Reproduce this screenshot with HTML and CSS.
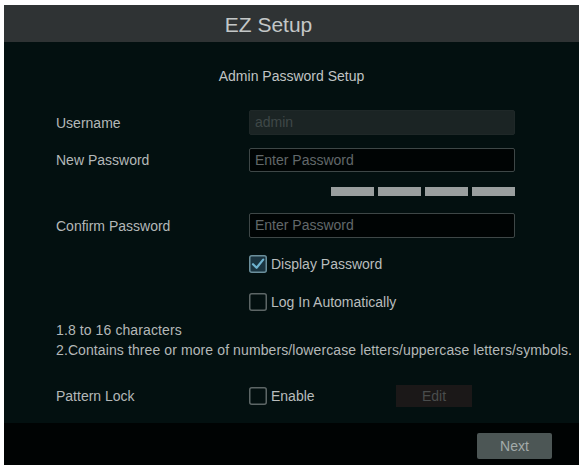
FILE: index.html
```html
<!DOCTYPE html>
<html>
<head>
<meta charset="utf-8">
<link rel="stylesheet" href="styles.css">
</head>
<body>
<div class="window">
  <div class="header">EZ Setup</div>
  <div class="content">
    <div class="subtitle">Admin Password Setup</div>
    <div class="row r-user">
      <div class="label">Username</div>
      <div class="input disabled">admin</div>
    </div>
    <div class="row r-new">
      <div class="label">New Password</div>
      <div class="input">Enter Password</div>
    </div>
    <div class="row r-bars">
      <div></div>
      <div class="bars"><span></span><span></span><span></span><span></span></div>
    </div>
    <div class="row r-confirm">
      <div class="label">Confirm Password</div>
      <div class="input">Enter Password</div>
    </div>
    <div class="row r-display">
      <div></div>
      <div class="check">
        <svg class="box" width="18" height="18" viewBox="0 0 18 18"><rect x="0.75" y="0.75" width="16.5" height="16.5" rx="2" fill="#1a3440" stroke="#6b8f9c" stroke-width="1.5"/><path d="M4 9.2 L7.6 12.8 L14.2 4.6" fill="none" stroke="#6fb3cf" stroke-width="2.2" stroke-linecap="round" stroke-linejoin="round"/></svg>
        <span>Display Password</span>
      </div>
    </div>
    <div class="row r-auto">
      <div></div>
      <div class="check">
        <svg class="box" width="18" height="18" viewBox="0 0 18 18"><rect x="0.75" y="0.75" width="16.5" height="16.5" rx="2" fill="none" stroke="#5d6666" stroke-width="1.5"/></svg>
        <span>Log In Automatically</span>
      </div>
    </div>
    <div class="notes">
      <div>1.8 to 16 characters</div>
      <div>2.Contains three or more of numbers/lowercase letters/uppercase letters/symbols.</div>
    </div>
    <div class="row r-pattern">
      <div class="label">Pattern Lock</div>
      <div class="pattern">
        <div class="check">
          <svg class="box" width="18" height="18" viewBox="0 0 18 18"><rect x="0.75" y="0.75" width="16.5" height="16.5" rx="2" fill="none" stroke="#5d6666" stroke-width="1.5"/></svg>
          <span>Enable</span>
        </div>
        <div class="edit">Edit</div>
      </div>
    </div>
  </div>
  <div class="footer">
    <div class="next">Next</div>
  </div>
</div>
</body>
</html>
```
FILE: styles.css
```css
html, body {
  margin: 0;
  padding: 0;
  background: #ffffff;
}
body {
  font-family: "Liberation Sans", Arial, sans-serif;
  font-size: 14px;
  color: #b9bdbd;
}
.window {
  margin: 5px 5px 0 4px;
  width: 575px;
  height: 460px;
  display: flex;
  flex-direction: column;
}
.header {
  height: 37px;
  background: #2f3334;
  color: #c3c7c7;
  font-size: 21px;
  line-height: 39px;
  text-align: center;
  padding-right: 46px;
}
.content {
  height: 381px;
  background: #031010;
  padding: 26px 0 0 52px;
  box-sizing: border-box;
}
.subtitle {
  line-height: 16px;
  text-align: center;
  margin-left: -52px;
  color: #c0c4c4;
}
.row {
  display: grid;
  grid-template-columns: 193px 266px;
  align-items: center;
}
.label {
  color: #b4b8b8;
}
.input {
  height: 25px;
  box-sizing: border-box;
  border: 1px solid #3e4747;
  background: #000404;
  color: #62686a;
  padding-left: 5px;
  line-height: 23px;
  border-radius: 2px;
}
.input.disabled {
  background: #1b2424;
  border-color: #1f2828;
  color: #3f4848;
}
.r-user { margin-top: 26px; }
.r-new { margin-top: 13px; }
.r-new .input { height: 24px; line-height: 22px; }
.r-bars { margin-top: 15px; }
.bars {
  display: flex;
  justify-content: flex-end;
  gap: 4px;
}
.bars span {
  width: 43px;
  height: 9px;
  background: #9a9f9f;
}
.r-confirm { margin-top: 17px; }
.r-display { margin-top: 17px; }
.r-auto { margin-top: 20px; }
.check {
  display: flex;
  align-items: center;
  gap: 4px;
  height: 18px;
}
.box { display: block; flex: none; }
.notes {
  margin-top: 9px;
  line-height: 20px;
  letter-spacing: 0.1px;
  color: #b4b8b8;
}
.r-pattern { margin-top: 25px; }
.pattern {
  display: flex;
  align-items: center;
}
.pattern .check { width: 147px; }
.edit {
  width: 76px;
  height: 22px;
  line-height: 22px;
  text-align: center;
  background: #1b1818;
  color: #4a4d4d;
}
.footer {
  height: 42px;
  background: #000303;
  display: flex;
  justify-content: flex-end;
  align-items: flex-start;
  padding: 10px 27px 0 0;
  box-sizing: border-box;
}
.next {
  width: 75px;
  height: 26px;
  line-height: 26px;
  text-align: center;
  background: #4c5655;
  color: #a3abaa;
  border-radius: 2px;
}
```
